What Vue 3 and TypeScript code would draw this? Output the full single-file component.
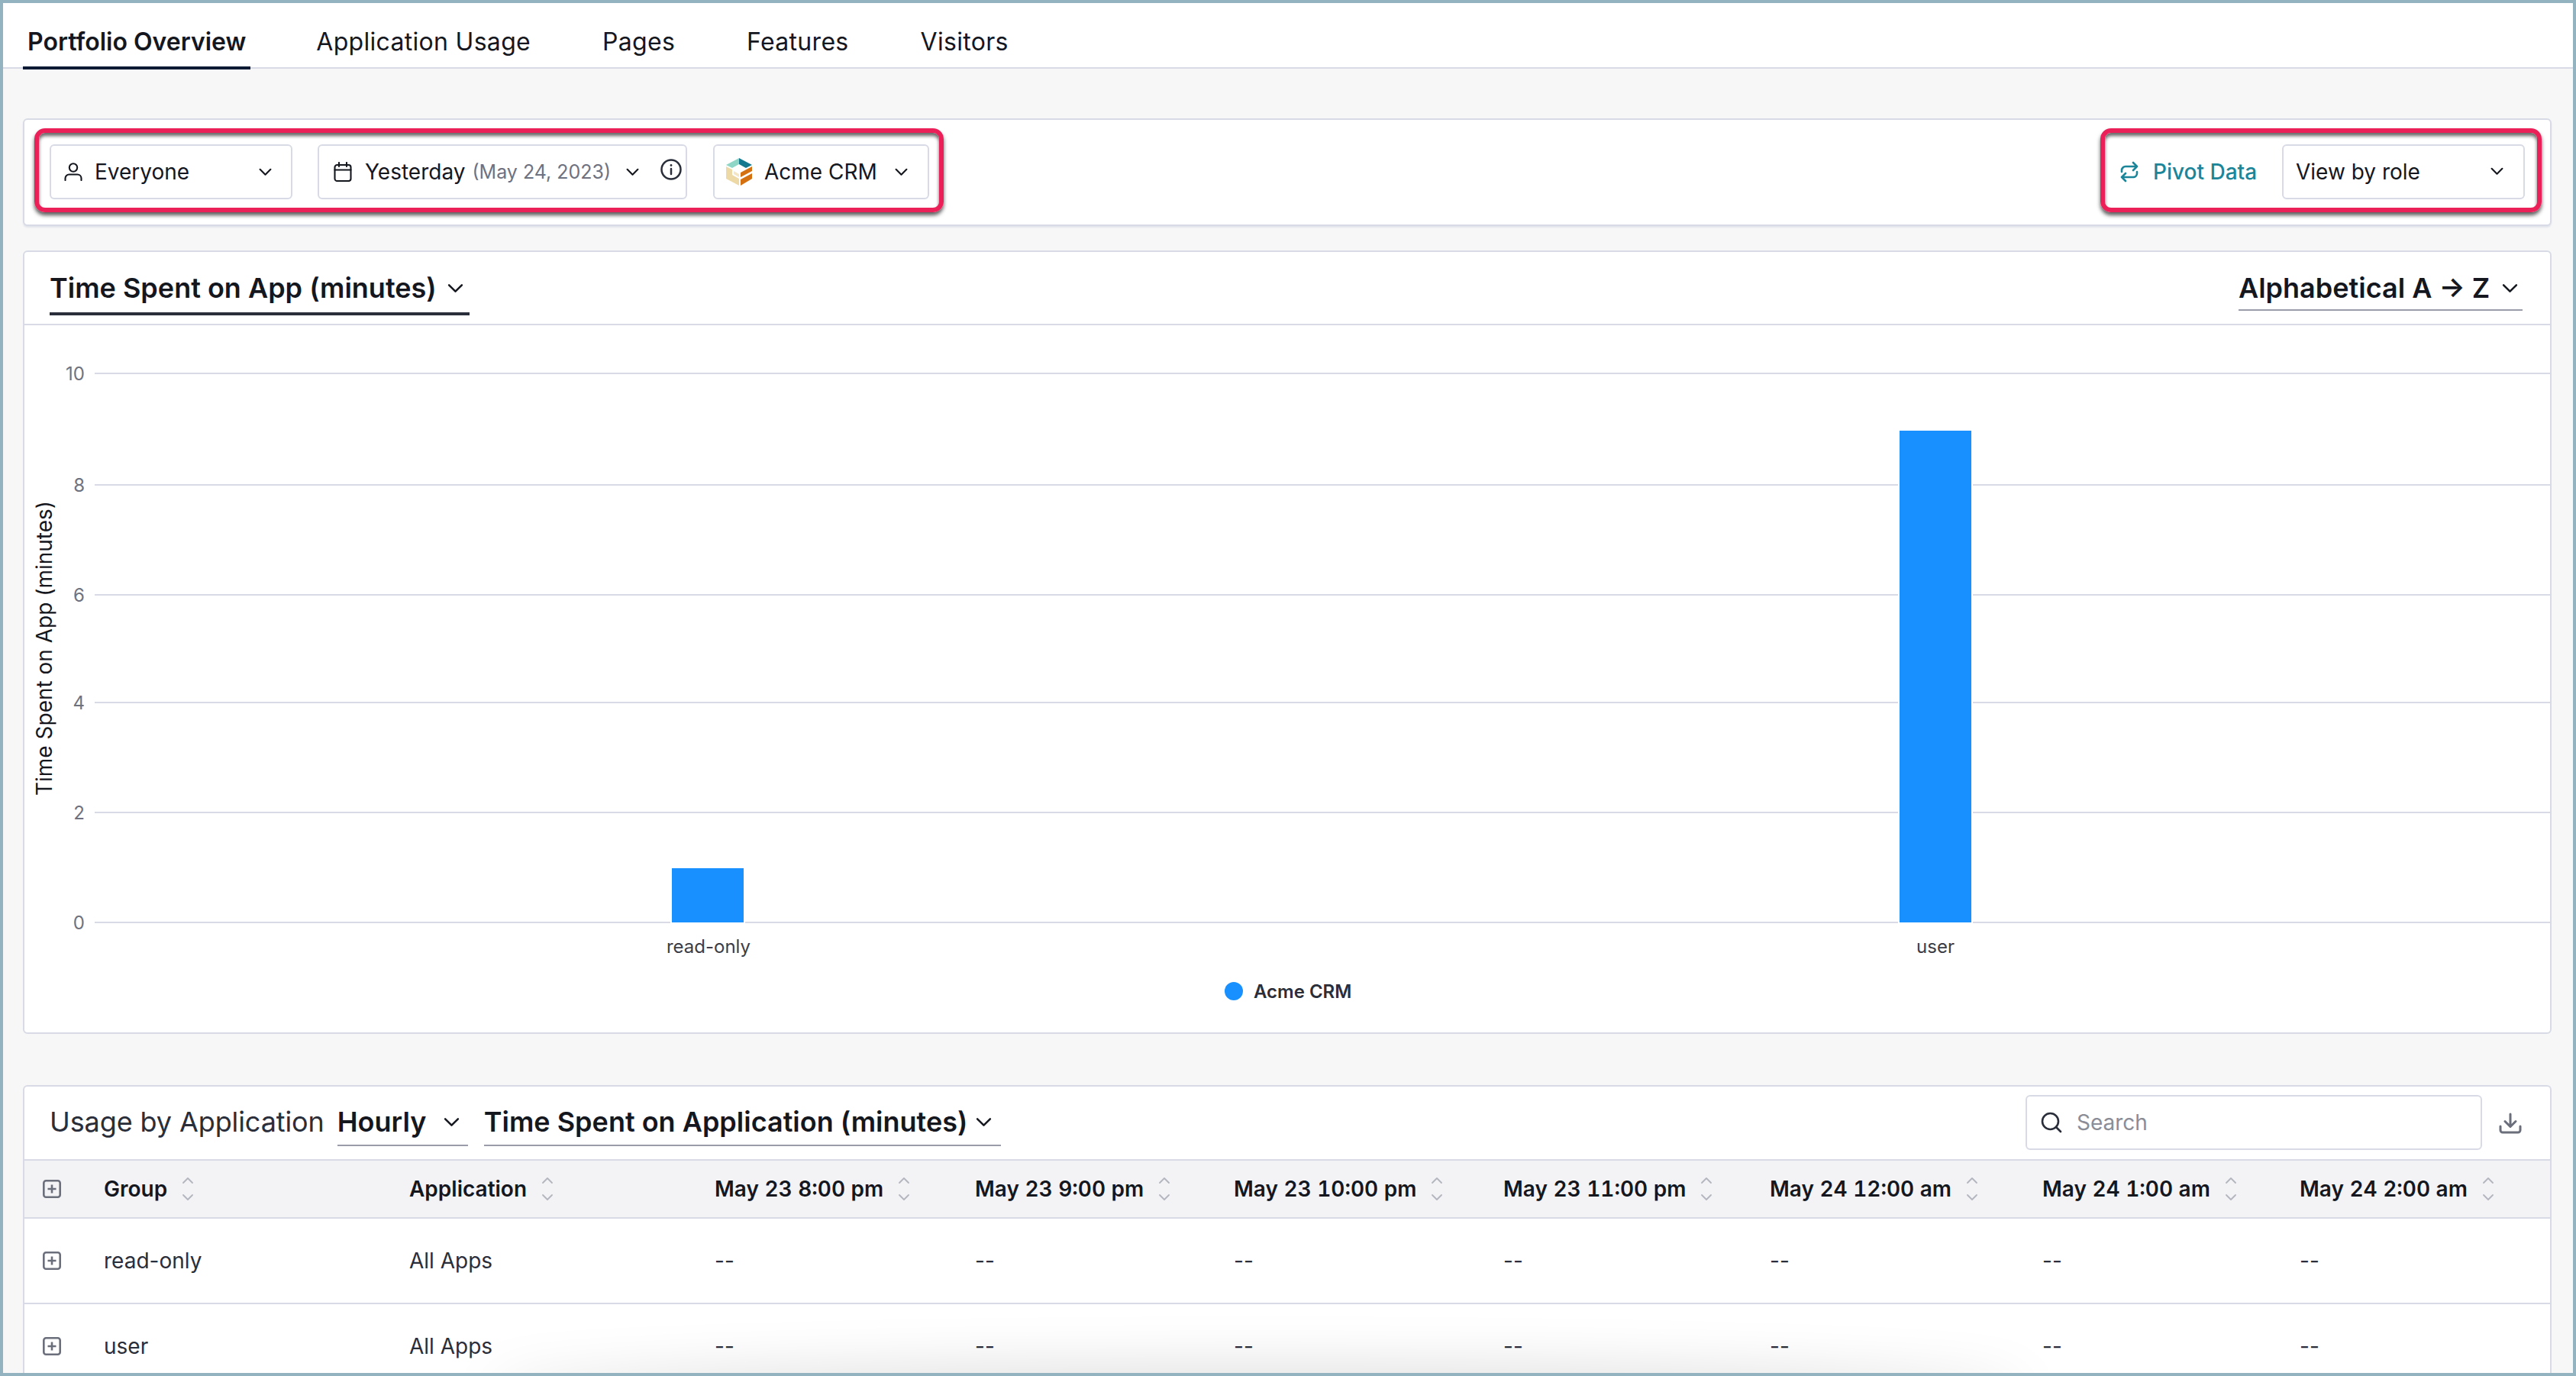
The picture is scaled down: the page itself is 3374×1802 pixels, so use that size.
<script setup lang="ts">
const tabs = ['Portfolio Overview', 'Application Usage', 'Pages', 'Features', 'Visitors']
const ticks = [
  { label: '10', y: 63 },
  { label: '8', y: 209 },
  { label: '6', y: 353 },
  { label: '4', y: 494 },
  { label: '2', y: 638 },
  { label: '0', y: 782 },
]
const bars = [
  { label: 'read-only', x: 848, w: 94, y: 711, h: 71, cx: 896 },
  { label: 'user', x: 2456, w: 94, y: 138, h: 644, cx: 2503 },
]
const columns = [
  'Group',
  'Application',
  'May 23 8:00 pm',
  'May 23 9:00 pm',
  'May 23 10:00 pm',
  'May 23 11:00 pm',
  'May 24 12:00 am',
  'May 24 1:00 am',
  'May 24 2:00 am',
]
const rows = ['read-only', 'user']
const empties = [0, 1, 2, 3, 4, 5, 6]
</script>

<template>
  <div class="frame">
    <nav class="tabs">
      <a v-for="(t, i) in tabs" :key="t" class="tab" :class="{ active: i === 0 }">{{ t }}</a>
    </nav>

    <main class="page">
      <section class="card filters">
        <div class="hl hl-left">
          <div class="select s-everyone">
            <svg class="ic" viewBox="0 0 24 24" fill="none" stroke="#15171f" stroke-width="2.100" stroke-linecap="round">
              <circle cx="12" cy="6.500" r="5.200" />
              <path d="M1.500 23v-2.500a5 5 0 0 1 5-5h11a5 5 0 0 1 5 5V23" />
            </svg>
            <span class="grow">Everyone</span>
            <svg class="chev" viewBox="0 0 16 10" fill="none" stroke="#15171f" stroke-width="2" stroke-linecap="round" stroke-linejoin="round"><path d="M1.500 1.500 8 8l6.500-6.500" /></svg>
          </div>
          <div class="select s-date">
            <svg class="ic ic-cal" viewBox="0 0 24 26" fill="none" stroke="#15171f" stroke-width="2.100" stroke-linecap="round" stroke-linejoin="round">
              <rect x="1.500" y="4" width="21" height="21" rx="3" />
              <path d="M1.500 10.500h21M7 1v5M17 1v5" />
            </svg>
            <span>Yesterday</span>
            <span class="muted">(May 24, 2023)</span>
            <svg class="chev chev-date" viewBox="0 0 16 10" fill="none" stroke="#15171f" stroke-width="2" stroke-linecap="round" stroke-linejoin="round"><path d="M1.500 1.500 8 8l6.500-6.500" /></svg>
            <svg class="info" viewBox="0 0 28 28" fill="none" stroke="#2a2e3a" stroke-width="2.500" stroke-linecap="round">
              <circle cx="14" cy="14" r="12.500" />
              <path d="M14 13v7" />
              <circle cx="14" cy="8.500" r="1.400" fill="#2a2e3a" stroke="none" />
            </svg>
          </div>
          <div class="select s-app">
            <svg class="logo" viewBox="0 0 34 36">
              <polygon points="17,0 0,9 8,13 17,8" fill="#8fd6c6" />
              <polygon points="17,0 34,9 26,13 17,8" fill="#14798f" />
              <polygon points="0,11 8,15 8,22 17,27 17,36 0,27" fill="#ecd9a6" />
              <polygon points="10,17 17,21 17,25 10,21" fill="#f4e6c4" />
              <polygon points="34,11 34,17 19,25 19,19" fill="#d4700f" />
              <polygon points="34,20 34,27 19,36 19,28" fill="#d4700f" />
            </svg>
            <span class="grow">Acme CRM</span>
            <svg class="chev" viewBox="0 0 16 10" fill="none" stroke="#15171f" stroke-width="2" stroke-linecap="round" stroke-linejoin="round"><path d="M1.500 1.500 8 8l6.500-6.500" /></svg>
          </div>
        </div>
        <div class="hl hl-right">
          <a class="pivot">
            <svg class="ic-pivot" viewBox="0 0 24 28" fill="none" stroke="#1b8599" stroke-width="2.600" stroke-linecap="round" stroke-linejoin="round">
              <path d="M17 2l5 5-5 5M22 7H7a5 5 0 0 0-5 5v2" />
              <path d="M7 26l-5-5 5-5M2 21h15a5 5 0 0 0 5-5v-2" />
            </svg>
            <span>Pivot Data</span>
          </a>
          <div class="select s-pivot">
            <span class="grow">View by role</span>
            <svg class="chev" viewBox="0 0 16 10" fill="none" stroke="#15171f" stroke-width="2" stroke-linecap="round" stroke-linejoin="round"><path d="M1.500 1.500 8 8l6.500-6.500" /></svg>
          </div>
        </div>
      </section>

      <section class="card chart-card">
        <header class="chart-head">
          <div class="drop drop-active">
            <span>Time Spent on App (minutes)</span>
            <svg class="chev-lg" viewBox="0 0 20 12" fill="none" stroke="#15171f" stroke-width="2.400" stroke-linecap="round" stroke-linejoin="round"><path d="M2 2l8 8 8-8" /></svg>
          </div>
          <div class="drop drop-sort">
            <span>Alphabetical A → Z</span>
            <svg class="chev-lg" viewBox="0 0 20 12" fill="none" stroke="#15171f" stroke-width="2.400" stroke-linecap="round" stroke-linejoin="round"><path d="M2 2l8 8 8-8" /></svg>
          </div>
        </header>
        <svg class="chart" width="3308" height="926" viewBox="0 0 3308 926">
          <text class="axis-title" transform="translate(36 423) rotate(-90)" text-anchor="middle">Time Spent on App (minutes)</text>
          <g v-for="t in ticks" :key="t.label">
            <line x1="92" x2="3308" :y1="t.y" :y2="t.y" stroke="#d8dbe6" stroke-width="2" />
            <text class="tick" x="79" :y="t.y + 9" text-anchor="end">{{ t.label }}</text>
          </g>
          <g v-for="b in bars" :key="b.label">
            <rect :x="b.x - 2" :y="b.y" :width="b.w + 4" :height="b.h + 4" fill="#fff" />
            <rect :x="b.x" :y="b.y" :width="b.w" :height="b.h" fill="#1890ff" />
            <text class="cat" :x="b.cx" y="822" text-anchor="middle">{{ b.label }}</text>
          </g>
          <circle cx="1584" cy="872" r="12" fill="#1890ff" />
          <text class="legend" x="1610" y="881">Acme CRM</text>
        </svg>
      </section>

      <section class="card table-card">
        <header class="table-head">
          <span class="t-title">Usage by Application</span>
          <div class="drop drop-hourly">
            <span>Hourly</span>
            <svg class="chev-lg" viewBox="0 0 20 12" fill="none" stroke="#15171f" stroke-width="2.400" stroke-linecap="round" stroke-linejoin="round"><path d="M2 2l8 8 8-8" /></svg>
          </div>
          <div class="drop drop-metric">
            <span>Time Spent on Application (minutes)</span>
            <svg class="chev-lg" viewBox="0 0 20 12" fill="none" stroke="#15171f" stroke-width="2.400" stroke-linecap="round" stroke-linejoin="round"><path d="M2 2l8 8 8-8" /></svg>
          </div>
          <div class="search">
            <svg class="ic-search" viewBox="0 0 28 28" fill="none" stroke="#2a2e3a" stroke-width="2.600" stroke-linecap="round">
              <circle cx="12.500" cy="12.500" r="10.500" />
              <path d="M20 20l6 6" />
            </svg>
            <span>Search</span>
          </div>
          <svg class="ic-download" viewBox="0 0 30 28" fill="none" stroke="#6b6e7b" stroke-width="3" stroke-linecap="round" stroke-linejoin="round">
            <path d="M15 2v16M8 11.500l7 7 7-7" />
            <path d="M2 18v5a3 3 0 0 0 3 3h20a3 3 0 0 0 3-3v-5" />
          </svg>
        </header>
        <div class="grid g-head">
          <div class="cell"><svg class="plus" viewBox="0 0 24 24" fill="none" stroke="#6b6e7b" stroke-width="2.600"><rect x="1.300" y="1.300" width="21.400" height="21.400" rx="3" /><path d="M12 6.500v11M6.500 12h11" /></svg></div>
          <div v-for="c in columns" :key="c" class="cell head-cell">
            <span>{{ c }}</span>
            <svg class="sort" viewBox="0 0 14 32" fill="none" stroke="#b4b6bf" stroke-width="1.800" stroke-linecap="round" stroke-linejoin="round">
              <path d="M1 8l6-6 6 6M1 24l6 6 6-6" />
            </svg>
          </div>
        </div>
        <div v-for="r in rows" :key="r" class="grid g-row">
          <div class="cell"><svg class="plus" viewBox="0 0 24 24" fill="none" stroke="#6b6e7b" stroke-width="2.600"><rect x="1.300" y="1.300" width="21.400" height="21.400" rx="3" /><path d="M12 6.500v11M6.500 12h11" /></svg></div>
          <div class="cell">{{ r }}</div>
          <div class="cell">All Apps</div>
          <div v-for="e in empties" :key="e" class="cell">--</div>
        </div>
      </section>
      <div class="edge-shadow"></div>
    </main>
  </div>
</template>

<style scoped>
.frame {
  position: relative;
  width: 3374px;
  height: 1802px;
  box-sizing: border-box;
  border: 4px solid #94b3c1;
  background: #f7f7f8;
  overflow: hidden;
  display: flex;
  flex-direction: column;
  font-family: Inter, "Noto Sans", sans-serif;
  color: #15171f;
}
.tabs {
  height: 86px;
  flex: none;
  box-sizing: border-box;
  background: #fff;
  border-bottom: 2px solid #d8dbe6;
  display: flex;
  align-items: flex-end;
  padding-left: 26px;
  gap: 82px;
  font-size: 32px;
  line-height: 40px;
  letter-spacing: 0.3px;
}
.tab {
  height: 84px;
  box-sizing: border-box;
  padding: 28px 6px 0;
  margin-bottom: -3px;
  border-bottom: 4px solid transparent;
}
.tab.active {
  font-weight: 600;
  letter-spacing: 0;
  margin-right: -2px;
  border-bottom-color: #0c1a33;
}
.page {
  position: relative;
  flex: 1;
  min-height: 0;
  padding: 65px 28px 0 26px;
  display: flex;
  flex-direction: column;
}
.card {
  background: #fff;
  border: 2px solid #d8dbe6;
  border-radius: 6px;
  box-sizing: border-box;
  flex: none;
}
.filters {
  height: 141px;
  display: flex;
  justify-content: space-between;
  align-items: flex-start;
  padding: 11px 11px 0 13px;
  box-shadow: 0 2px 2px #e2e4eb;
}
.hl {
  height: 110px;
  box-sizing: border-box;
  border: 6px solid #ec2059;
  border-radius: 14px;
  display: flex;
  align-items: center;
  box-shadow: 0 4px 5px rgba(40, 40, 40, 0.75), inset 0 4px 4px rgba(40, 40, 40, 0.7);
  font-size: 28px;
}
.hl-left {
  width: 1191px;
  padding: 4px 12px 0 14px;
  gap: 33px;
}
.hl-right {
  width: 578px;
  padding: 3px 16px 0 20px;
}
.select {
  height: 72px;
  box-sizing: border-box;
  border: 2px solid #d8dbe6;
  border-radius: 6px;
  display: flex;
  align-items: center;
  background: #fff;
  flex: none;
  white-space: nowrap;
}
.grow { flex: 1; }
.ic { width: 24px; height: 24px; flex: none; margin-right: 16px; }
.chev { width: 17px; height: 11px; flex: none; }
.s-everyone { width: 318px; padding: 0 25px 0 17px; }
.s-date { width: 484px; padding: 0 5px 0 19px; }
.s-date .ic-cal { height: 26px; margin-right: 17px; }
.muted { color: #6e7280; font-size: 25px; margin-left: 9px; }
.chev-date { margin-left: auto; }
.info { width: 28px; height: 28px; margin-left: 28px; margin-top: -6px; flex: none; }
.s-app { width: 283px; margin-left: 1px; padding: 0 26px 0 15px; }
.logo { width: 34px; height: 36px; margin-right: 16px; flex: none; }
.pivot {
  display: flex;
  align-items: center;
  color: #1b8599;
  font-weight: 500;
  flex: none;
  width: 212px;
}
.ic-pivot { width: 24px; height: 28px; margin-right: 19px; }
.s-pivot { width: 318px; padding: 0 26px 0 16px; }

.chart-card {
  margin-top: 32px;
  height: 1026px;
}
.chart-head {
  height: 96px;
  box-sizing: border-box;
  border-bottom: 2px solid #d8dbe6;
  display: flex;
  justify-content: space-between;
  align-items: flex-start;
  padding: 0 36px 0 33px;
}
.drop {
  display: flex;
  align-items: center;
  font-size: 36px;
  font-weight: 600;
  line-height: 44px;
  gap: 16px;
  white-space: nowrap;
}
.chev-lg { width: 21px; height: 13px; flex: none; }
.drop-active {
  margin-top: 26px;
  height: 57px;
  padding: 2px 8px 13px 0;
  gap: 14px;
  box-sizing: border-box;
  border-bottom: 4px solid #2a2e3a;
}
.drop-sort {
  margin-top: 24px;
  height: 53px;
  width: 372px;
  justify-content: space-between;
  padding: 2px 16px 7px 0;
  box-sizing: border-box;
  border-bottom: 2px solid #9a9da9;
}
.chart { display: block; }
.axis-title { font-size: 28px; fill: #15171f; }
.tick { font-size: 24px; fill: #6e7280; }
.cat { font-size: 24px; fill: #3a3d48; }
.legend { font-size: 24px; font-weight: 600; fill: #2a2e3a; }

.table-card {
  margin-top: 67px;
  flex: 1;
  border-bottom: none;
  border-radius: 6px 6px 0 0;
  min-height: 0;
}
.table-head {
  height: 97px;
  box-sizing: border-box;
  display: flex;
  align-items: flex-start;
  padding: 11px 19px 0 33px;
  font-size: 36px;
  border-bottom: 2px solid #d8dbe6;
}
.t-title {
  margin-top: 13px;
  line-height: 44px;
  margin-right: 17px;
  letter-spacing: -0.1px;
  color: #2a2e3a;
  white-space: nowrap;
}
.drop-hourly, .drop-metric {
  margin-top: 13px;
  height: 54px;
  box-sizing: border-box;
  padding-bottom: 8px;
  border-bottom: 2px solid #9a9da9;
}
.drop-hourly { width: 171px; gap: 0; justify-content: space-between; padding-right: 11px; }
.drop-metric { width: 677px; margin-left: 21px; padding-right: 10px; gap: 11px; }
.search {
  margin-left: auto;
  width: 598px;
  height: 72px;
  box-sizing: border-box;
  border: 2px solid #d8dbe6;
  border-radius: 6px;
  display: flex;
  align-items: center;
  padding-left: 18px;
  font-size: 28px;
  color: #8b8d96;
}
.ic-search { width: 28px; height: 28px; margin-right: 19px; }
.ic-download { width: 30px; height: 28px; margin: 23px 18px 0 22px; flex: none; }

.grid {
  display: grid;
  grid-template-columns: 104px 400px 400px 341px 339px 353px 349px 357px 337px 1fr;
  font-size: 28px;
  box-sizing: border-box;
}
.cell {
  display: flex;
  align-items: center;
  white-space: nowrap;
  min-width: 0;
}
.cell:first-child { padding-left: 24px; }
.plus { width: 24px; height: 24px; }
.g-head {
  height: 76px;
  background: #f3f3f6;
  border-bottom: 2px solid #d8dbe6;
  font-weight: 600;
  font-variant-numeric: tabular-nums;
}
.head-cell { gap: 20px; }
.sort { width: 14px; height: 32px; flex: none; }
.g-row {
  height: 112px;
  border-bottom: 2px solid #d8dbe6;
  color: #2a2e3a;
}
.edge-shadow {
  position: absolute;
  left: 640px;
  right: 720px;
  bottom: -50px;
  height: 50px;
  border-radius: 50%;
  box-shadow: 0 0 70px 10px rgba(0, 0, 0, 0.13);
  pointer-events: none;
}
</style>
